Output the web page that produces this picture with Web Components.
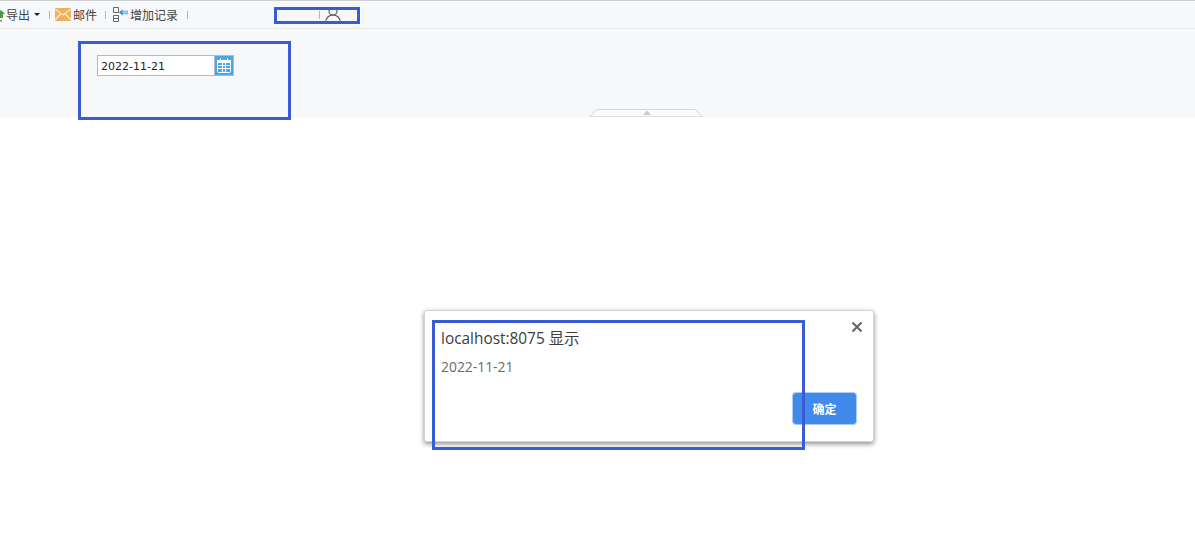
<!DOCTYPE html>
<html lang="zh"><head><meta charset="utf-8"><title>Report</title>
<style>
html,body{margin:0;padding:0;height:557px;overflow:hidden;background:#fff;font-family:"Open Sans","Noto Sans CJK SC",sans-serif}
</style></head><body>
<app-page></app-page>
<script>
function def(name,css,html){customElements.define(name,class extends HTMLElement{constructor(){super();this.attachShadow({mode:'open'}).innerHTML='<style>'+css+'</style>'+html;}});}
const F='"Liberation Sans","Noto Sans CJK SC",sans-serif';
def('tool-item',`:host{display:inline-flex;align-items:center;height:27px;font:12px ${F};color:#444;white-space:nowrap}`,`<slot name="icon"></slot><slot></slot>`);
def('tool-sep',`:host{display:block;width:1px;height:8px;background:#b4b4b4}`,``);
def('tool-bar',`:host{display:flex;align-items:center;box-sizing:border-box;height:29px;border-top:1px solid #cfd0d2;border-bottom:1px solid #e6e7e9;background:#f7f8fa;overflow:hidden}`,`
<tool-item style="margin-left:-3px"><svg slot="icon" width="8" height="14" viewBox="0 0 8 14" style="margin-right:1px"><path d="M0 6l4-4 4 4H6v4H2V6z" fill="#4d9a45"/><path d="M0 9h2v3h3v1.500H0z" fill="#8a8a8a"/></svg>导出</tool-item>
<svg width="6" height="3" viewBox="0 0 6 3" style="margin-left:4px"><path d="M0 0h6L3 3z" fill="#222"/></svg>
<tool-sep style="margin-left:9px"></tool-sep>
<tool-item style="margin-left:5px"><svg slot="icon" width="16" height="13" viewBox="0 0 16 13" style="margin-right:2px"><rect width="16" height="13" fill="#edb25f"/><path d="M0 1l8 6 8-6M0 12l6-6.500M16 12l-6-6.500" fill="none" stroke="#fbe6c4" stroke-width="1.200"/></svg>邮件</tool-item>
<tool-sep style="margin-left:8px"></tool-sep>
<tool-item style="margin-left:6px"><svg slot="icon" width="16" height="15" viewBox="0 0 16 15" style="margin-right:2px"><path d="M1.500 .5h5v5h-5zM1.500 8.500h5v6h-5zM1.500 11.500h5" fill="none" stroke="#666"/><rect x="10" y="4" width="6" height="3" fill="#a5d0ef" stroke="#5f9fd2" stroke-width=".6"/><path d="M7 5.500l3.500-3v6z" fill="#2c8fe0"/></svg>增加记录</tool-item>
<tool-sep style="margin-left:9px"></tool-sep>
<tool-sep style="margin-left:131px"></tool-sep>
<svg width="16" height="16" viewBox="0 0 16 16" style="margin-left:5px"><circle cx="8" cy="4" r="4" fill="none" stroke="#555" stroke-width="1.100"/><path d="M.8 15c0-4 3-7 7.200-7s7.200 3 7.200 7" fill="none" stroke="#555" stroke-width="1.100"/></svg>`);
def('date-field',`:host{display:flex;width:137px;height:21px;box-sizing:border-box;border:1px solid #b5b8c8;background:#fff;font:11px "DejaVu Sans",sans-serif;color:#222}
.t{flex:1;padding-left:3px;line-height:21px}
.b{width:18px;background:#4aa8e6;border-left:1px solid #b5b8c8;display:flex;align-items:center;justify-content:center}`,
`<div class="t">2022-11-21</div><div class="b"><svg width="14" height="15" viewBox="0 0 14 15"><rect x=".5" y="2.500" width="13" height="12" rx="1" fill="none" stroke="#fff"/><rect x="0" y="2" width="14" height="3" fill="#fff"/><path d="M3.500 .5v3M10.500 .5v3" stroke="#fff"/><path d="M5.500 5v9M8.500 5v9M1 7.500h12M1 10.500h12" fill="none" stroke="#fff"/></svg></div>`);
def('filter-panel',`:host{display:block;box-sizing:border-box;height:88px;padding:26px 0 0 97px;background:#f7f8fa;position:relative;overflow:hidden}
svg{position:absolute;left:589px;bottom:0}`,
`<slot></slot><svg width="115" height="8" viewBox="0 0 115 8"><path d="M0 8 L8 .5 H106 L114 8" fill="#fbfbfc" stroke="#d6d6d6"/><path d="M58 1.500l-4 4.500h8z" fill="#c9c9c9"/><path d="M0 7.500h114" stroke="#dedede"/></svg>`);
def('alert-dialog',`:host{position:absolute;left:424px;top:310px;width:450px;height:132px;box-sizing:border-box;background:#fff;border:1px solid #d4d4d4;border-radius:3px;box-shadow:0 2px 5px rgba(0,0,0,.45);padding:17px 16px 0 16px;font-family:"Open Sans","Noto Sans CJK SC",sans-serif}
.h{font-size:15.400px;line-height:21px;color:#3c3c3c}
.m{font-size:13.900px;line-height:18px;color:#6b6b6b;margin-top:9px}
.f{display:flex;justify-content:flex-end;margin-top:16px}
button{width:65px;height:33px;border:1px solid #a9cdf5;border-radius:4px;background:#418aeb;color:#fff;font:bold 12px "Noto Sans CJK SC",sans-serif;padding:0}
svg{position:absolute;right:10px;top:10px}`,
`<div class="h">localhost:8075 显示</div><div class="m">2022-11-21</div><div class="f"><button>确定</button></div>
<svg width="12" height="12" viewBox="0 0 12 12"><path d="M1.500 1.500l9 9M10.500 1.500l-9 9" stroke="#5f6368" stroke-width="2"/></svg>`);
def('note-box',`:host{position:absolute;box-sizing:border-box;border:3px solid #3a5bd6;pointer-events:none}`,``);
def('app-page',`:host{display:block;position:relative;width:1195px;height:557px;overflow:hidden}`,`
<tool-bar></tool-bar>
<filter-panel><date-field></date-field></filter-panel>
<alert-dialog></alert-dialog>
<note-box style="left:274px;top:7px;width:86px;height:17px"></note-box>
<note-box style="left:78px;top:41px;width:213px;height:79px"></note-box>
<note-box style="left:432px;top:320px;width:373px;height:130px"></note-box>`);
</script></body></html>
